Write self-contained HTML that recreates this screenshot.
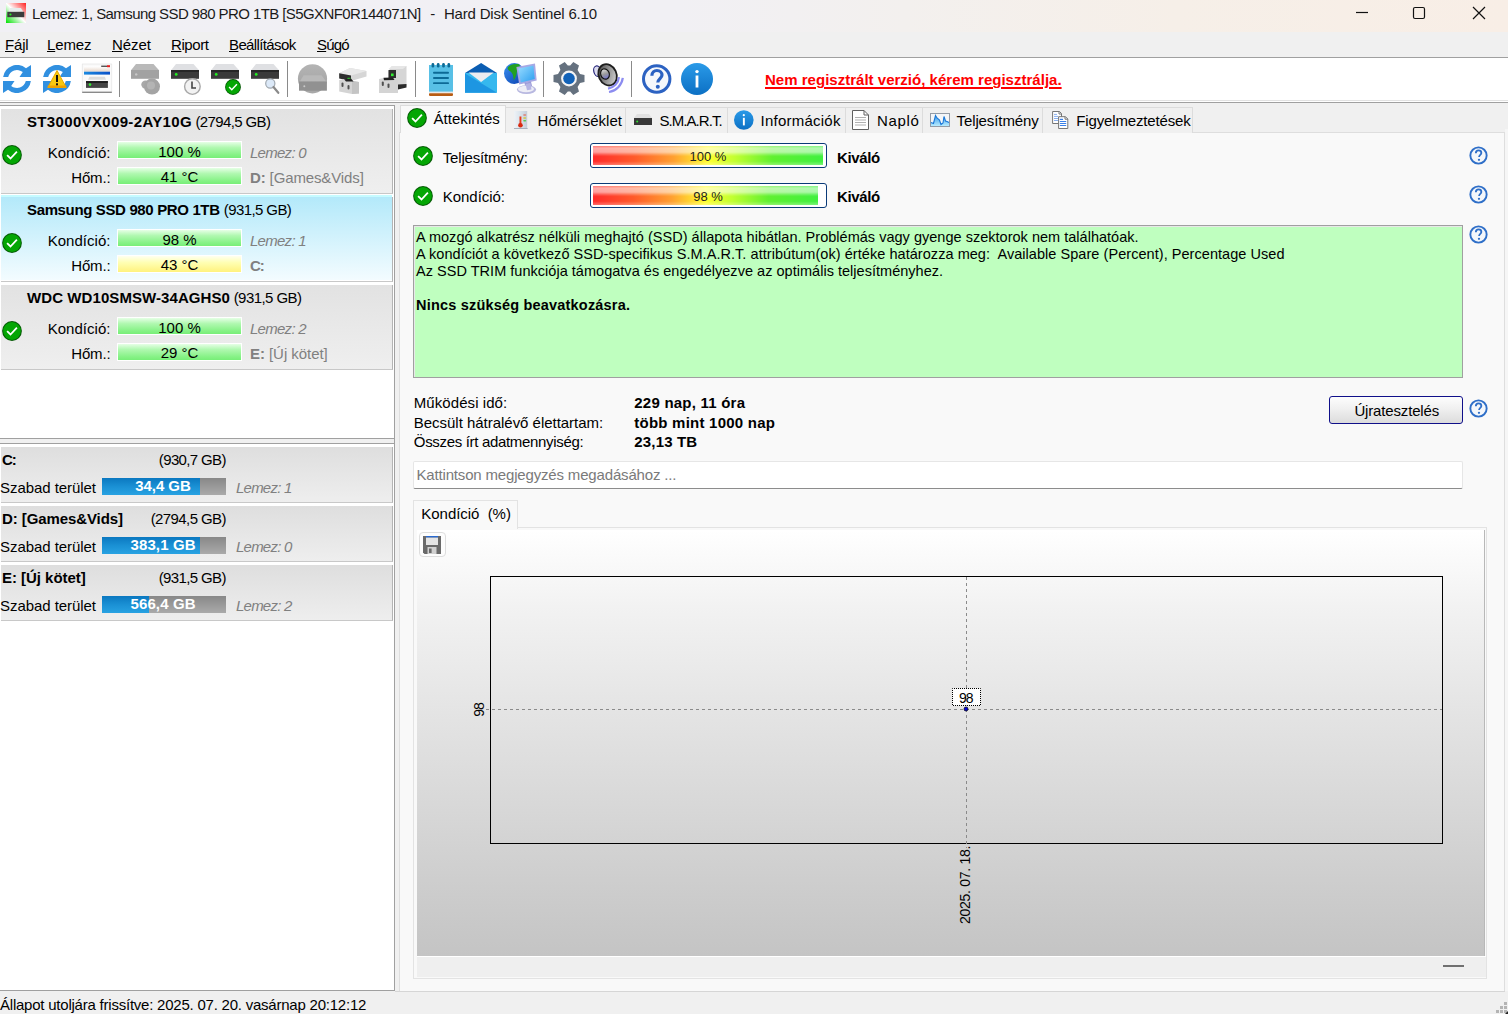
<!DOCTYPE html>
<html><head><meta charset="utf-8"><style>
*{margin:0;padding:0;box-sizing:border-box}
html,body{width:1508px;height:1014px;overflow:hidden;background:#f0f0f0;font-family:"Liberation Sans",sans-serif;color:#000}
.a{position:absolute}
.t{position:absolute;white-space:nowrap;line-height:1}
svg{position:absolute;overflow:visible}
#title{left:0;top:0;width:1508px;height:32px;background:linear-gradient(90deg,#f1f0f5 0%,#f1f0f4 45%,#f3f0ee 60%,#f6efe8 78%,#f8eee6 100%)}
#menu{left:0;top:32px;width:1508px;height:25px;background:#f0f0f0}
#tb{left:0;top:57px;width:1508px;height:46px;background:#fff;border-top:1px solid #a0a0a0;border-bottom:1px solid #a0a0a0}
#tbl{left:0;top:100px;width:1508px;height:1px;background:#e2e2e2}
.sep{position:absolute;top:61px;width:1px;height:36px;background:#8a8a8a}
.m u{text-decoration:underline;text-underline-offset:1px;text-decoration-thickness:1px}
#lp{left:0;top:105px;width:395px;height:886px;background:#fff;border-right:1px solid #a0a0a0;border-top:1px solid #a0a0a0;border-bottom:1px solid #a0a0a0}
.card{position:absolute;left:1px;width:392px;height:85px;background:linear-gradient(#e2e2e2,#efefef);border-right:1px solid #b4b4b4;border-bottom:1px solid #c8c8c8}
.card.sel{background:linear-gradient(#b3e9fa,#f4fcff)}
.bar{position:absolute;left:117px;width:125px;height:18px;border:1px solid #fff;background:linear-gradient(#e6ffe6,#b0f8b0 35%,#86f286 80%,#78ee78)}
.bar.y{background:linear-gradient(#fffff0,#ffffb4 40%,#fff27e)}
.vcard{position:absolute;left:1px;width:392px;height:56px;background:linear-gradient(#dedede,#eeeeee);border-right:1px solid #b4b4b4;border-bottom:1px solid #c8c8c8}
.vbar{position:absolute;left:102px;width:124px;height:17px;background:linear-gradient(#888888,#999999 50%,#aaaaaa)}
.vbar i{position:absolute;left:0;top:0;height:17px;background:linear-gradient(#0b78c0,#1a90d4 50%,#28a2e2)}
#rp{left:395px;top:103px;width:1113px;height:888px;background:#f0f0f0}
#rc{left:399px;top:132px;width:1106px;height:859px;background:#f9f9f9;border:1px solid #dedede;border-bottom:none}
.tab{position:absolute;top:107px;height:26px;background:#f0f0f0;border:1px solid #dcdcdc;border-bottom:none;border-left:none}
.tab.act{top:105px;height:28px;background:#f9f9f9;border-left:1px solid #dcdcdc}
#st{left:0;top:991px;width:1508px;height:23px;background:#f0f0f0;border-top:1px solid #f0f0f0}
</style></head><body>
<div class="a" id="title"></div><div class="a" id="menu"></div><div class="a" id="tb"></div><div class="a" id="tbl"></div><div class="a" id="rp"></div><div class="a" id="lp"></div><div class="a" id="st"></div>
<svg width="0" height="0" style="position:absolute"><defs>
<symbol id="drv" viewBox="0 0 28 15"><path d="M5 0 H22.5 L27.8 6 H0.2 Z" fill="#dfe0e3"/><rect x="0" y="6" width="28" height="8.8" fill="#3a3a3a"/><rect x="0" y="6" width="28" height="2" fill="#262626"/><circle cx="5.2" cy="10.4" r="1.4" fill="#20f020"/></symbol>
<symbol id="drvg" viewBox="0 0 28 15"><path d="M5 0 H22.5 L27.8 6 H0.2 Z" fill="#b9b9b9"/><rect x="0" y="6" width="28" height="8.8" fill="#a2a2a2"/><circle cx="5.2" cy="10.4" r="1.2" fill="#c8c8c8"/></symbol>
<symbol id="chk" viewBox="0 0 20 20"><circle cx="10" cy="10" r="9.9" fill="#055a05"/><circle cx="10" cy="10" r="8.9" fill="#04a604"/><path d="M5.1 10.1 L8.5 13.5 L14.9 6.6" fill="none" stroke="#fff" stroke-width="1.8"/></symbol>
<symbol id="help" viewBox="0 0 20 20"><circle cx="10" cy="10" r="8.6" fill="#f4f7fb" stroke="#2f6fc8" stroke-width="2"/><path d="M7.2 7.6 C7.2 5.6 8.6 4.7 10.1 4.7 C11.8 4.7 13 5.8 13 7.3 C13 9.3 10.6 9.4 10.6 11.6" fill="none" stroke="#2f6fc8" stroke-width="1.9"/><circle cx="10.5" cy="14.6" r="1.2" fill="#2f6fc8"/></symbol>
<symbol id="refr" viewBox="0 0 28 28"><path id="ra" d="M0.14,12 A14,14 0 0 1 23,3.3 L28,0 L28,12 L16.5,12 L19.8,7.1 A9,9 0 0 0 5.2,12 Z" fill="#3190e0"/><path d="M0.14,12 A14,14 0 0 1 23,3.3 L28,0 L28,12 L16.5,12 L19.8,7.1 A9,9 0 0 0 5.2,12 Z" fill="#3190e0" transform="rotate(180 14 14)"/></symbol>
</defs></svg>
<svg style="left:6px;top:3px" width="20" height="20" viewBox="0 0 20 20">
<defs><linearGradient id="tg" x1="0" y1="1" x2="1" y2="0"><stop offset="0" stop-color="#00e000"/><stop offset=".5" stop-color="#ffffff"/><stop offset="1" stop-color="#ff2020"/></linearGradient></defs>
<rect x="0" y="0" width="20" height="20" fill="url(#tg)"/>
<path d="M4.2 5 L14.9 5 L17.2 8.8 L2.4 8.8 Z" fill="#e6ecec"/><rect x="1.3" y="8.8" width="17" height="5.4" fill="#3c3c3c"/><circle cx="4.4" cy="11.5" r="1.1" fill="#20f020"/></svg>
<svg style="left:1355px;top:6px" width="16" height="16"><line x1="1" y1="6.5" x2="13" y2="6.5" stroke="#111" stroke-width="1.2"/></svg>
<svg style="left:1412px;top:6px" width="16" height="16"><rect x="1.5" y="1.5" width="11" height="11" rx="1.5" fill="none" stroke="#111" stroke-width="1.2"/></svg>
<svg style="left:1472px;top:6px" width="16" height="16"><path d="M1 1 L13 13 M13 1 L1 13" stroke="#111" stroke-width="1.2"/></svg>

<div class="t" id="w0" style="top:6.30px;font-size:15px;letter-spacing:-0.585px;left:32px;color:#1a1a1a">Lemez: 1, Samsung SSD 980 PRO 1TB [S5GXNF0R144071N]</div>
<div class="t" id="w1" style="top:6.30px;font-size:15px;left:430.2px;color:#1a1a1a">-</div>
<div class="t" id="w2" style="top:6.30px;font-size:15px;letter-spacing:-0.209px;left:444px;color:#1a1a1a">Hard Disk Sentinel 6.10</div>
<div class="t m" id="w3" style="top:37.00px;font-size:15px;letter-spacing:-0.163px;left:5px;"><u>F</u>ájl</div>
<div class="t m" id="w4" style="top:37.00px;font-size:15px;letter-spacing:-0.133px;left:47px;"><u>L</u>emez</div>
<div class="t m" id="w5" style="top:37.00px;font-size:15px;letter-spacing:-0.076px;left:112px;"><u>N</u>ézet</div>
<div class="t m" id="w6" style="top:37.00px;font-size:15px;letter-spacing:-0.426px;left:171px;"><u>R</u>iport</div>
<div class="t m" id="w7" style="top:37.00px;font-size:15px;letter-spacing:-0.619px;left:229px;"><u>B</u>eállítások</div>
<div class="t m" id="w8" style="top:37.00px;font-size:15px;letter-spacing:-0.849px;left:317px;"><u>S</u>úgó</div>

<svg style="left:3px;top:65px" width="28" height="28"><use href="#refr" width="28" height="28"/></svg>
<svg style="left:43px;top:65px" width="28" height="28"><use href="#refr" width="28" height="28"/>
<path d="M14 5.5 L23.2 22.5 H4.8 Z" fill="#f8c810" stroke="#e9a800" stroke-width="1" stroke-linejoin="round"/><rect x="4.8" y="20.5" width="18.4" height="2" fill="#f0a000"/><rect x="13" y="10" width="2" height="7" fill="#111"/><rect x="13" y="18.3" width="2" height="2" fill="#111"/></svg>
<svg style="left:80px;top:60px" width="35" height="37"><defs><linearGradient id="i3t" x1="0" y1="0" x2="0" y2="1"><stop offset="0" stop-color="#ffffff"/><stop offset="1" stop-color="#e6d6ca"/></linearGradient><linearGradient id="i3b" x1="0" y1="0" x2="1" y2="0"><stop offset="0" stop-color="#1a8ae0"/><stop offset="1" stop-color="#0a50c8"/></linearGradient></defs><rect x="2.2" y="4" width="29.6" height="28.5" fill="#fafafa" stroke="#e0e0e0" stroke-width=".6"/><rect x="2.2" y="31.6" width="29.6" height="1.4" fill="#8a8a8a"/><rect x="4" y="6.5" width="26" height="5.2" fill="url(#i3t)"/><rect x="21.2" y="5.6" width="6" height="1.3" fill="#444"/><rect x="27" y="5.2" width="3" height="2" fill="#e82020"/><rect x="4" y="11.7" width="26" height="2.9" fill="url(#i3b)"/><path d="M9.5 16.8 H24.8 L26 19.7 H8 Z" fill="#dcdcdc"/><rect x="6" y="21.2" width="21.9" height="6.7" fill="#444"/><rect x="6" y="21.2" width="21.9" height="1.5" fill="#111"/><circle cx="10" cy="24.6" r="1.3" fill="#30f030"/></svg>
<div class="sep" style="left:119px"></div>
<svg style="left:131px;top:64px" width="30" height="32"><use href="#drvg" width="28" height="15"/><circle cx="14.5" cy="20.6" r="4.2" fill="#a8a8a8"/><circle cx="21" cy="22.6" r="8" fill="#a4a4a4"/><circle cx="20" cy="21.6" r="4" fill="#b4b4b4"/></svg>
<svg style="left:171px;top:64px" width="30" height="32"><use href="#drv" width="28" height="15"/><circle cx="21.4" cy="22.6" r="7.8" fill="#f2f2f2" stroke="#a8a8a8" stroke-width="1.4"/><path d="M21 17.5 V24 H25" fill="none" stroke="#444" stroke-width="1.6"/></svg>
<svg style="left:211px;top:64px" width="30" height="32"><use href="#drv" width="28" height="15"/><use href="#chk" x="14" y="15" width="16" height="16"/></svg>
<svg style="left:251px;top:64px" width="30" height="32"><use href="#drv" width="28" height="15"/><circle cx="19.3" cy="19.5" r="4.6" fill="#dce9f8" stroke="#a0a8b0" stroke-width="1.2"/><path d="M22.5 23 L27.3 28.8" stroke="#8a8a8a" stroke-width="2.2" stroke-linecap="round"/></svg>
<div class="sep" style="left:287px"></div>
<svg style="left:293px;top:60px" width="40" height="37"><defs><linearGradient id="i8" x1="0" y1="0" x2="0" y2="1"><stop offset="0" stop-color="#b4b4b4"/><stop offset=".5" stop-color="#aaaaaa"/><stop offset="1" stop-color="#a8a8a8"/></linearGradient></defs><circle cx="19.5" cy="18.8" r="14.6" fill="url(#i8)"/><path d="M10.6 15.3 H28.5 L33.2 21.5 H6.9 Z" fill="#b9b9b9"/><rect x="6" y="21.5" width="27.9" height="9.2" fill="#919191"/><circle cx="11.3" cy="26.3" r="1" fill="#c8c8c8"/></svg>
<svg style="left:335px;top:62px" width="75" height="35"><path d="M4.2 11.2 L15 6 L31.5 9 L31.5 14.5 L16 19 L4.2 16.5 Z" fill="#d6d6d6"/><path d="M4.2 11.2 L15 6 L31.5 9 L16 13.5 Z" fill="#e8e8e8"/><path d="M4.2 11.2 L16 13.5 L16 19 L4.2 16.5 Z" fill="#2e2e2e"/><rect x="12.5" y="15.8" width="3" height="1.8" fill="#30e030"/><path d="M4.2 18 L10 17 L17 19 L24 20 L24 31.5 L17 32 L4.2 29.5 Z" fill="#d4d4d4"/><path d="M10 17.5 L17 19 L17 32 L24 31.5 V20 Z" fill="#c4c4c4"/><path d="M9 17.3 L16 16.5 L18.5 19.5 L11 19.5 Z" fill="#222"/><rect x="6.5" y="20.5" width="2" height="4.5" rx="1" fill="#505050"/><rect x="12.5" y="23" width="2" height="4.5" rx="1" fill="#505050"/>
<path d="M53.5 9 L57 4 H71.5 V24 L68 26 H53.5 Z" fill="#d6d6d6"/><path d="M57 4 H71.5 L68 7 H53.5 Z" fill="#e6e6e6"/><path d="M53.5 8 H61 V19 H53.5 Z" fill="#2e2e2e"/><rect x="56" y="11.5" width="2.6" height="2.6" fill="#30f030"/><path d="M44 17 L49 16 H61 L63 18 V31 H44 Z" fill="#d4d4d4"/><path d="M48.5 15.8 L58 15.6 L59.5 18 L49 18.3 Z" fill="#222"/><rect x="46.8" y="19.5" width="2" height="4.6" rx="1" fill="#505050"/><rect x="52.5" y="21.5" width="2" height="4.6" rx="1" fill="#505050"/><path d="M63 22.5 L71.5 22 V25.5 L63 27.5 Z" fill="#2a2a2a"/></svg>
<div class="sep" style="left:415px"></div>
<svg style="left:428px;top:63px" width="26" height="33"><rect x="1" y="2" width="24" height="27" fill="#58c0e6"/><rect x="1" y="28.6" width="24" height="1.8" fill="#e8e8e8"/><rect x="1" y="30.3" width="24" height="2.6" rx=".8" fill="#b85c14"/><g fill="#0c6a96"><rect x="3.6" y="0" width="2.6" height="4.5" rx="1.2"/><rect x="8.9" y="0" width="2.6" height="4.5" rx="1.2"/><rect x="14.2" y="0" width="2.6" height="4.5" rx="1.2"/><rect x="19.5" y="0" width="2.6" height="4.5" rx="1.2"/><rect x="5" y="8.8" width="16" height="1.9" rx=".9"/><rect x="5" y="14" width="16" height="1.9" rx=".9"/><rect x="5" y="19.2" width="16" height="1.9" rx=".9"/></g></svg>
<svg style="left:460px;top:58px" width="85" height="42"><path d="M5 15 H37 V34.7 H5 Z" fill="#36b8ee"/><path d="M5 15.5 L37 34.7 H5 Z" fill="#1d96e2"/><path d="M5 15 L21.1 5 L37 15 Z" fill="#0b5db2"/><path d="M8.5 14.6 H33.8 L21.1 24 Z" fill="#ececf0"/>
<defs><linearGradient id="gl" x1="0" y1="0" x2="1" y2="1"><stop offset="0" stop-color="#3a90f0"/><stop offset="1" stop-color="#0a40b0"/></linearGradient><linearGradient id="scr" x1="0" y1="0" x2="1" y2="1"><stop offset="0" stop-color="#9adcff"/><stop offset="1" stop-color="#2a9ef0"/></linearGradient></defs>
<circle cx="54.4" cy="15.5" r="10.4" fill="url(#gl)"/><path d="M47.5 10 C49.5 6.5 55 5.3 59.5 6.5 L60 10 C58.5 11 57 12 56.8 14 C56.5 17 55.5 20 53.8 22.5 C53.2 19.5 53.5 16.5 51.5 14.5 C50 13 48 12.5 47.5 10 Z" fill="#22a022"/>
<path d="M56.4 9 L75 5.6 L76.7 22.5 L59.2 26.5 Z" fill="#a8a8e4"/><path d="M58.3 10.6 L73.4 7.6 L74.8 21 L60.8 24.5 Z" fill="url(#scr)"/>
<path d="M64.5 25 L71 23.5 L72.7 31 L66 32 Z" fill="#9a9ad8"/><ellipse cx="66.5" cy="31.6" rx="9.6" ry="4.4" fill="#b8b8e0"/><ellipse cx="66" cy="31" rx="8" ry="3.2" fill="#eeeef6"/><path d="M65.5 26 L70.5 25 L71.5 31.5 L67 32.3 Z" fill="#b4b4e4"/></svg>
<div class="sep" style="left:543px"></div>
<svg style="left:553px;top:63px" width="32" height="32"><g transform="translate(16 15.5) rotate(90)"><path d="M-3.4,-15.5 L3.4,-15.5 L4.4,-11 L8.6,-8.6 L13,-10 L16.4,-4.3 L13,-1.2 L13,1.2 L16.4,4.3 L13,10 L8.6,8.6 L4.4,11 L3.4,15.5 L-3.4,15.5 L-4.4,11 L-8.6,8.6 L-13,10 L-16.4,4.3 L-13,1.2 L-13,-1.2 L-16.4,-4.3 L-13,-10 L-8.6,-8.6 L-4.4,-11 Z" fill="#65717f"/><circle r="11" fill="#65717f"/><circle r="7.9" fill="#f4f4f4"/><circle r="5.8" fill="#1262b8"/></g></svg>
<svg style="left:590px;top:60px" width="38" height="37"><defs><linearGradient id="spk" x1="0" y1="0" x2="1" y2="1"><stop offset="0" stop-color="#3a3a3a"/><stop offset=".45" stop-color="#8a8a8a"/><stop offset="1" stop-color="#e8e8e8"/></linearGradient><linearGradient id="spd" x1="0" y1="0" x2="0" y2="1"><stop offset="0" stop-color="#e0e0e0"/><stop offset=".5" stop-color="#9a9a9a"/><stop offset="1" stop-color="#7070d0"/></linearGradient></defs>
<ellipse cx="7.4" cy="11.2" rx="3.6" ry="5.4" transform="rotate(-15 7.4 11.2)" fill="#dcdcf0" stroke="#26267a" stroke-width="1.2"/>
<ellipse cx="17.6" cy="14.8" rx="8.9" ry="11" transform="rotate(-25 17.6 14.8)" fill="url(#spk)" stroke="#1e1e1e" stroke-width="1.8"/>
<ellipse cx="15" cy="14" rx="4.3" ry="5.3" transform="rotate(-20 15 14)" fill="url(#spd)" stroke="#111" stroke-width="1.2"/>
<path d="M18 28.6 A13 13 0 0 0 29 17.2" fill="none" stroke="#8c8cf0" stroke-width="2.2"/><path d="M19 32 A16.5 16.5 0 0 0 32.8 17.8" fill="none" stroke="#8c8cf0" stroke-width="2.2"/></svg>
<div class="sep" style="left:631px"></div>
<svg style="left:642px;top:64px" width="30" height="30"><circle cx="14.7" cy="15" r="13.2" fill="#f6f8fc" stroke="#2c62c2" stroke-width="3"/><path d="M9.9 11.8 C9.9 8.3 12.2 6.5 14.9 6.5 C17.9 6.5 20 8.5 20 11.1 C20 14.5 15.8 14.8 15.8 18.6" fill="none" stroke="#2c62c2" stroke-width="3.2"/><circle cx="15.8" cy="22.8" r="2" fill="#2c62c2"/></svg>
<svg style="left:681px;top:63px" width="33" height="33"><defs><linearGradient id="ig" x1="0" y1="0" x2="0" y2="1"><stop offset="0" stop-color="#2a9ae8"/><stop offset="1" stop-color="#0c70c4"/></linearGradient></defs><circle cx="16" cy="16" r="16" fill="url(#ig)"/><rect x="14.6" y="12.5" width="2.8" height="12" fill="#fff"/><circle cx="16" cy="8.6" r="1.7" fill="#fff"/></svg>
<div class="t" id="w9" style="top:72.30px;font-size:15px;letter-spacing:0.015px;left:765px;font-weight:bold;color:#f00;text-decoration:underline;text-decoration-thickness:1.5px;text-underline-offset:1.5px">Nem regisztrált verzió, kérem regisztrálja.</div>
<div class="card" style="top:109px"></div>
<div class="t" id="w10" style="top:114.30px;font-size:15px;letter-spacing:0.345px;left:27px;font-weight:bold">ST3000VX009-2AY10G</div>
<div class="t" id="w11" style="top:114.30px;font-size:15px;letter-spacing:-0.612px;left:195.4px;">(2794,5 GB)</div>
<svg style="left:2px;top:145px" width="20" height="20"><use href="#chk" width="20" height="20"/></svg>
<div class="t" id="w12" style="top:145.00px;font-size:15px;letter-spacing:0.032px;right:1397.5px;">Kondíció:</div>
<div class="t" id="w13" style="top:170.30px;font-size:15px;letter-spacing:-0.154px;right:1397.5px;">Hőm.:</div>
<div class="bar" style="top:141px"></div>
<div class="bar" style="top:167px"></div>
<div class="t" id="w14" style="top:144.30px;font-size:15px;left:29.5px;width:300px;text-align:center;">100 %</div>
<div class="t" id="w15" style="top:169.30px;font-size:15px;left:29.5px;width:300px;text-align:center;">41 °C</div>
<div class="t" id="w16" style="top:145.00px;font-size:15px;letter-spacing:-0.729px;left:250px;color:#808080;font-style:italic">Lemez: 0</div>
<div class="t" id="w17" style="top:170.30px;font-size:15px;letter-spacing:-0.128px;left:250px;color:#808080"><b>D:</b> [Games&amp;Vids]</div>
<div class="card sel" style="top:197px"></div>
<div class="a" style="left:1px;top:195px;width:391px;height:2px;background:#c6fbff"></div>
<div class="a" style="left:1px;top:280px;width:391px;height:1px;background:#ffffff"></div>
<div class="t" id="w18" style="top:202.30px;font-size:15px;letter-spacing:-0.359px;left:27px;font-weight:bold">Samsung SSD 980 PRO 1TB</div>
<div class="t" id="w19" style="top:202.30px;font-size:15px;letter-spacing:-0.597px;left:223.8px;">(931,5 GB)</div>
<svg style="left:2px;top:233px" width="20" height="20"><use href="#chk" width="20" height="20"/></svg>
<div class="t" id="w20" style="top:233.00px;font-size:15px;letter-spacing:0.032px;right:1397.5px;">Kondíció:</div>
<div class="t" id="w21" style="top:258.30px;font-size:15px;letter-spacing:-0.154px;right:1397.5px;">Hőm.:</div>
<div class="bar" style="top:229px"></div>
<div class="bar y" style="top:255px"></div>
<div class="t" id="w22" style="top:232.30px;font-size:15px;left:29.5px;width:300px;text-align:center;">98 %</div>
<div class="t" id="w23" style="top:257.30px;font-size:15px;left:29.5px;width:300px;text-align:center;">43 °C</div>
<div class="t" id="w24" style="top:233.00px;font-size:15px;letter-spacing:-0.729px;left:250px;color:#808080;font-style:italic">Lemez: 1</div>
<div class="t" id="w25" style="top:258.30px;font-size:15px;letter-spacing:-1.000px;left:250px;color:#808080"><b>C:</b></div>
<div class="card" style="top:285px"></div>
<div class="t" id="w26" style="top:290.30px;font-size:15px;letter-spacing:0.079px;left:27px;font-weight:bold">WDC WD10SMSW-34AGHS0</div>
<div class="t" id="w27" style="top:290.30px;font-size:15px;letter-spacing:-0.564px;left:233.7px;">(931,5 GB)</div>
<svg style="left:2px;top:321px" width="20" height="20"><use href="#chk" width="20" height="20"/></svg>
<div class="t" id="w28" style="top:321.00px;font-size:15px;letter-spacing:0.032px;right:1397.5px;">Kondíció:</div>
<div class="t" id="w29" style="top:346.30px;font-size:15px;letter-spacing:-0.154px;right:1397.5px;">Hőm.:</div>
<div class="bar" style="top:317px"></div>
<div class="bar" style="top:343px"></div>
<div class="t" id="w30" style="top:320.30px;font-size:15px;left:29.5px;width:300px;text-align:center;">100 %</div>
<div class="t" id="w31" style="top:345.30px;font-size:15px;left:29.5px;width:300px;text-align:center;">29 °C</div>
<div class="t" id="w32" style="top:321.00px;font-size:15px;letter-spacing:-0.729px;left:250px;color:#808080;font-style:italic">Lemez: 2</div>
<div class="t" id="w33" style="top:346.30px;font-size:15px;letter-spacing:-0.055px;left:250px;color:#808080"><b>E:</b> [Új kötet]</div>
<div class="vcard" style="top:447px"></div>
<div class="t" id="w34" style="top:452.30px;font-size:15px;letter-spacing:-1.000px;left:2px;font-weight:bold">C:</div>
<div class="t" id="w35" style="top:452.30px;font-size:15px;letter-spacing:-0.642px;right:1282.2px;">(930,7 GB)</div>
<div class="t" id="w36" style="top:479.80px;font-size:15px;letter-spacing:-0.056px;left:0px;">Szabad terület</div>
<div class="vbar" style="top:478px"><i style="width:98px"></i></div>
<div class="t" id="w37" style="top:478.10px;font-size:15px;letter-spacing:-0.063px;left:13.0px;width:300px;text-align:center;text-indent:-0.063px;color:#fff;font-weight:bold">34,4 GB</div>
<div class="t" id="w38" style="top:479.50px;font-size:15px;letter-spacing:-0.772px;left:236px;color:#808080;font-style:italic">Lemez: 1</div>
<div class="vcard" style="top:506px"></div>
<div class="t" id="w39" style="top:511.30px;font-size:15px;letter-spacing:-0.090px;left:2px;font-weight:bold">D: [Games&amp;Vids]</div>
<div class="t" id="w40" style="top:511.30px;font-size:15px;letter-spacing:-0.602px;right:1282.2px;">(2794,5 GB)</div>
<div class="t" id="w41" style="top:538.80px;font-size:15px;letter-spacing:-0.056px;left:0px;">Szabad terület</div>
<div class="vbar" style="top:537px"><i style="width:98px"></i></div>
<div class="t" id="w42" style="top:537.10px;font-size:15px;letter-spacing:0.112px;left:13.0px;width:300px;text-align:center;text-indent:0.112px;color:#fff;font-weight:bold">383,1 GB</div>
<div class="t" id="w43" style="top:538.50px;font-size:15px;letter-spacing:-0.772px;left:236px;color:#808080;font-style:italic">Lemez: 0</div>
<div class="vcard" style="top:565px"></div>
<div class="t" id="w44" style="top:570.30px;font-size:15px;letter-spacing:-0.031px;left:2px;font-weight:bold">E: [Új kötet]</div>
<div class="t" id="w45" style="top:570.30px;font-size:15px;letter-spacing:-0.631px;right:1282.2px;">(931,5 GB)</div>
<div class="t" id="w46" style="top:597.80px;font-size:15px;letter-spacing:-0.056px;left:0px;">Szabad terület</div>
<div class="vbar" style="top:596px"><i style="width:47px"></i></div>
<div class="t" id="w47" style="top:596.10px;font-size:15px;letter-spacing:0.126px;left:13.0px;width:300px;text-align:center;text-indent:0.126px;color:#fff;font-weight:bold">566,4 GB</div>
<div class="t" id="w48" style="top:597.50px;font-size:15px;letter-spacing:-0.772px;left:236px;color:#808080;font-style:italic">Lemez: 2</div>
<div class="a" style="left:0;top:438px;width:395px;height:1px;background:#a0a0a0"></div>
<div class="a" style="left:0;top:443px;width:395px;height:1px;background:#a0a0a0"></div>
<div class="a" style="left:0;top:439px;width:394px;height:4px;background:#f0f0f0"></div>
<div class="a" id="rc"></div>
<div class="tab act" style="left:400px;width:106px"></div>
<div class="tab " style="left:506px;width:120px"></div>
<div class="tab " style="left:626px;width:102px"></div>
<div class="tab " style="left:728px;width:118px"></div>
<div class="tab " style="left:846px;width:77px"></div>
<div class="tab " style="left:923px;width:120px"></div>
<div class="tab " style="left:1043px;width:150px"></div>
<svg style="left:407px;top:108px" width="20" height="20"><use href="#chk" width="20" height="20"/></svg>
<svg style="left:513px;top:110px" width="16" height="20"><defs><linearGradient id="thg" x1="0" x2="1"><stop offset="0" stop-color="#eef2f6"/><stop offset=".4" stop-color="#dde6ee"/><stop offset="1" stop-color="#c4ccd8"/></linearGradient></defs><path d="M1 1 H14.2 V18.4 L13.6 19 H1.6 L1 18.4 Z" fill="url(#thg)"/><rect x="1" y="18" width="13.6" height="1" fill="#a8b0bc"/><rect x="6.5" y="6.5" width="1.9" height="8.5" fill="#e83a1c"/><circle cx="7.45" cy="15.2" r="2.3" fill="#d82a10"/><rect x="10.2" y="4.2" width="3" height="1.6" rx=".8" fill="#e08070"/><rect x="10.2" y="7.2" width="3" height="1.6" rx=".8" fill="#d0c840"/><rect x="10.2" y="10" width="3" height="1.6" rx=".8" fill="#58c858"/></svg>
<svg style="left:634px;top:114px" width="18" height="12"><path d="M3 0 H15 L18 4 H0 Z" fill="#e0e0e0"/><rect x="0" y="4" width="18" height="7" fill="#383838"/><circle cx="3.2" cy="7.5" r="1" fill="#30e030"/></svg>
<svg style="left:734px;top:110px" width="20" height="20"><defs><linearGradient id="ig2" x1="0" y1="0" x2="0" y2="1"><stop offset="0" stop-color="#2a9ae8"/><stop offset="1" stop-color="#0c70c4"/></linearGradient></defs><circle cx="9.8" cy="10" r="9.8" fill="url(#ig2)"/><rect x="8.9" y="7.8" width="1.9" height="7.6" fill="#fff"/><circle cx="9.8" cy="5.2" r="1.1" fill="#fff"/></svg>
<svg style="left:852px;top:110px" width="18" height="21"><path d="M0.5 0.5 H12 L16.5 5 V19.5 H0.5 Z" fill="#fff" stroke="#606060"/><path d="M12 0.5 V5 H16.5" fill="none" stroke="#606060"/><g stroke="#b0b0b0" stroke-width="1"><line x1="3" y1="7.5" x2="14" y2="7.5"/><line x1="3" y1="10" x2="14" y2="10"/><line x1="3" y1="12.5" x2="14" y2="12.5"/><line x1="3" y1="15" x2="14" y2="15"/></g></svg>
<svg style="left:925px;top:106px" width="30" height="26"><defs><linearGradient id="chf" x1="0" y1="0" x2="0" y2="1"><stop offset="0" stop-color="#3a9ae8"/><stop offset="1" stop-color="#b8ecff"/></linearGradient></defs><rect x="5.5" y="7.5" width="19" height="13" fill="#f4f6f8" stroke="#939ba6" stroke-width="1"/><path d="M6 16.5 L8.5 17.5 L10.5 9.5 L12 12 L14.5 14 L16 18.5 L18 17 L19 10.5 L20.5 15 L22 15.5 L24 16.5 V20 H6 Z" fill="url(#chf)"/><path d="M6 16.5 L8.5 17.5 L10.5 9.5 L12 12 L14.5 14 L16 18.5 L18 17 L19 10.5 L20.5 15 L22 15.5 L24 16.5" fill="none" stroke="#1a78d8" stroke-width="1.1"/></svg>
<svg style="left:1048px;top:106px" width="26" height="26"><path d="M4.6 5.5 H11.5 L13.5 7.5 V17.5 H4.6 Z" fill="#fff" stroke="#767676" stroke-width="1"/><path d="M11 5.5 V8 H13.5" fill="none" stroke="#767676"/><g stroke="#8ab0f0" stroke-width="1"><line x1="6" y1="8.4" x2="9" y2="8.4"/><line x1="6" y1="10.4" x2="10" y2="10.4"/><line x1="6" y1="12.5" x2="10" y2="12.5"/><line x1="6" y1="14.5" x2="10" y2="14.5"/></g><path d="M10.6 10.7 H17.5 L19.8 13 V22.5 H10.6 Z" fill="#fff" stroke="#767676" stroke-width="1"/><path d="M17 10.7 V13.2 H19.8" fill="none" stroke="#767676"/><g stroke="#3a80e8" stroke-width="1.1" stroke-linecap="round"><line x1="12.3" y1="13.4" x2="14.6" y2="13.4"/><line x1="12.3" y1="15.5" x2="17.8" y2="15.5"/><line x1="12.3" y1="17.5" x2="17.8" y2="17.5"/><line x1="12.3" y1="19.5" x2="17.8" y2="19.5"/></g></svg>
<div class="t" id="w49" style="top:111.00px;font-size:15px;letter-spacing:0.047px;left:433.5px;">Áttekintés</div>
<div class="t" id="w50" style="top:113.00px;font-size:15px;letter-spacing:0.020px;left:537.6px;">Hőmérséklet</div>
<div class="t" id="w51" style="top:113.30px;font-size:15px;letter-spacing:-0.943px;left:659.5px;">S.M.A.R.T.</div>
<div class="t" id="w52" style="top:113.30px;font-size:15px;letter-spacing:0.227px;left:760.6px;">Információk</div>
<div class="t" id="w53" style="top:113.30px;font-size:15px;letter-spacing:0.649px;left:877px;">Napló</div>
<div class="t" id="w54" style="top:113.30px;font-size:15px;letter-spacing:-0.098px;left:956.5px;">Teljesítmény</div>
<div class="t" id="w55" style="top:113.30px;font-size:15px;letter-spacing:-0.148px;left:1076.3px;">Figyelmeztetések</div>
<svg style="left:413px;top:146px" width="20" height="20"><use href="#chk" width="20" height="20"/></svg>
<div class="t" id="w56" style="top:150.20px;font-size:15px;letter-spacing:-0.196px;left:442.8px;">Teljesítmény:</div>
<div class="a" style="left:590px;top:143px;width:237px;height:25px;border:1.5px solid #0a3a78;border-radius:3px;background:#fff"></div>
<div class="a" style="left:593px;top:145.6px;width:230px;height:19.4px;background:linear-gradient(90deg,#ff2a2a 0%,#ff5a2a 18%,#ffa030 35%,#ffff30 50%,#c0ff30 62%,#60f030 78%,#40f040 100%)"></div>
<div class="a" style="left:593px;top:145.6px;width:230px;height:19.4px;background:linear-gradient(rgba(255,255,255,.35) 0%,rgba(255,255,255,.6) 12%,rgba(255,255,255,.55) 32%,rgba(255,255,255,.12) 48%,rgba(255,255,255,0) 56%,rgba(255,255,255,0) 80%,rgba(255,255,255,.3) 100%)"></div>
<div class="t" id="w57" style="top:149.60px;font-size:13px;left:558.0px;width:300px;text-align:center;color:#222">100 %</div>
<div class="t" id="w58" style="top:149.90px;font-size:15px;letter-spacing:-0.363px;left:837px;font-weight:bold">Kiváló</div>
<svg style="left:1469px;top:145.8px" width="20" height="20"><use href="#help" width="19" height="19"/></svg>
<svg style="left:413px;top:186px" width="20" height="20"><use href="#chk" width="20" height="20"/></svg>
<div class="t" id="w59" style="top:188.90px;font-size:15px;letter-spacing:-0.043px;left:442.8px;">Kondíció:</div>
<div class="a" style="left:590px;top:183px;width:237px;height:25px;border:1.5px solid #0a3a78;border-radius:3px;background:#fff"></div>
<div class="a" style="left:593px;top:185.6px;width:225px;height:19.4px;background:linear-gradient(90deg,#ff2a2a 0%,#ff5a2a 18%,#ffa030 35%,#ffff30 50%,#c0ff30 62%,#60f030 78%,#40f040 100%)"></div>
<div class="a" style="left:593px;top:185.6px;width:225px;height:19.4px;background:linear-gradient(rgba(255,255,255,.35) 0%,rgba(255,255,255,.6) 12%,rgba(255,255,255,.55) 32%,rgba(255,255,255,.12) 48%,rgba(255,255,255,0) 56%,rgba(255,255,255,0) 80%,rgba(255,255,255,.3) 100%)"></div>
<div class="t" id="w60" style="top:189.60px;font-size:13px;left:558.0px;width:300px;text-align:center;color:#222">98 %</div>
<div class="t" id="w61" style="top:188.90px;font-size:15px;letter-spacing:-0.363px;left:837px;font-weight:bold">Kiváló</div>
<svg style="left:1469px;top:184.8px" width="20" height="20"><use href="#help" width="19" height="19"/></svg>
<svg style="left:1469px;top:225px" width="20" height="20"><use href="#help" width="19" height="19"/></svg>
<div class="a" style="left:413px;top:225px;width:1050px;height:153px;background:#bfffbf;border:1px solid #a0a0a0;box-shadow:inset 1px 1px 0 #e8e8e8"></div>
<div class="t" id="w62" style="top:230.23px;font-size:14.5px;letter-spacing:0.019px;left:416px;">A mozgó alkatrész nélküli meghajtó (SSD) állapota hibátlan. Problémás vagy gyenge szektorok nem találhatóak.</div>
<div class="t" id="w63" style="top:247.03px;font-size:14.5px;letter-spacing:0.050px;left:416px;">A kondíciót a következő SSD-specifikus S.M.A.R.T. attribútum(ok) értéke határozza meg:&nbsp; Available Spare (Percent), Percentage Used</div>
<div class="t" id="w64" style="top:263.93px;font-size:14.5px;letter-spacing:0.025px;left:416px;">Az SSD TRIM funkciója támogatva és engedélyezve az optimális teljesítményhez.</div>
<div class="t" id="w65" style="top:297.73px;font-size:14.5px;letter-spacing:0.194px;left:416px;font-weight:bold">Nincs szükség beavatkozásra.</div>
<div class="t" id="w66" style="top:395.20px;font-size:15px;letter-spacing:0.070px;left:413.8px;">Működési idő:</div>
<div class="t" id="w67" style="top:395.20px;font-size:15px;letter-spacing:0.223px;left:634.3px;font-weight:bold">229 nap, 11 óra</div>
<div class="t" id="w68" style="top:414.90px;font-size:15px;letter-spacing:-0.025px;left:413.8px;">Becsült hátralévő élettartam:</div>
<div class="t" id="w69" style="top:414.90px;font-size:15px;letter-spacing:0.230px;left:634.3px;font-weight:bold">több mint 1000 nap</div>
<div class="t" id="w70" style="top:433.90px;font-size:15px;letter-spacing:-0.320px;left:413.8px;">Összes írt adatmennyiség:</div>
<div class="t" id="w71" style="top:433.90px;font-size:15px;letter-spacing:0.171px;left:634.3px;font-weight:bold">23,13 TB</div>
<div class="a" style="left:1329px;top:396px;width:134px;height:28px;border:1.5px solid #10108a;border-radius:3px;background:linear-gradient(#fdfdfd,#f0f0f0 45%,#dcdcdc)"></div>
<div class="t" id="w72" style="top:402.70px;font-size:15px;letter-spacing:-0.159px;left:1354.4px;">Újratesztelés</div>
<svg style="left:1469px;top:399px" width="20" height="20"><use href="#help" width="19" height="19"/></svg>
<div class="a" style="left:413px;top:461px;width:1050px;height:28px;background:#fff;border:1px solid #e6e6e6;border-bottom:1.5px solid #8c8c8c;border-radius:2px"></div>
<div class="t" id="w73" style="top:466.80px;font-size:15px;letter-spacing:-0.169px;left:416.5px;color:#7a7a7a">Kattintson megjegyzés megadásához ...</div>
<div class="a" style="left:413px;top:500px;width:105px;height:29px;background:#f9f9f9;border:1px solid #e3e3e3;border-bottom:none;z-index:1"></div>
<div class="a" style="left:413px;top:527px;width:1074px;height:452px;background:#f9f9f9;border:1px solid #e3e3e3"></div>
<div class="t" style="z-index:2;left:0;top:0"></div><div class="t" id="w74" style="top:506.00px;font-size:15px;letter-spacing:-0.037px;left:421.3px;z-index:2">Kondíció&nbsp; (%)</div>
<div class="a" style="left:417px;top:530px;width:1068px;height:426px;background:linear-gradient(#ffffff,#f2f2f2 18%,#e0e0e0 50%,#d2d2d2 75%,#c4c4c4);border-right:1px solid #b8b8b8"></div>
<div class="a" style="left:417px;top:956px;width:1069px;height:21px;background:#efefef;border-top:1px solid #fff"></div>
<div class="a" style="left:1443px;top:965px;width:21px;height:2px;background:#707070"></div>
<div class="a" style="left:418.5px;top:532px;width:27.5px;height:25px;border:1px solid #dedede;border-radius:4px;background:#fdfdfd"></div>
<svg style="left:423px;top:536px" width="18" height="18"><path d="M0 0 H18 V18 H1.5 L0 16.5 Z" fill="#6a6a6a"/><rect x="3" y="0" width="12" height="1.6" fill="#2a6ad0"/><rect x="3" y="1.6" width="12" height="7.4" fill="#e4e4e4"/><rect x="4.5" y="11" width="9" height="7" fill="#d0d0d0"/><rect x="6" y="12.5" width="2.6" height="4.5" fill="#6a6a6a"/></svg>
<div class="a" style="left:490px;top:576px;width:953px;height:268px;border:1.5px solid #000"></div>
<svg style="left:0;top:0" width="1508" height="1014"><line x1="486" y1="709.5" x2="1442" y2="709.5" stroke="#8a8a8a" stroke-width="1" stroke-dasharray="3 3"/><line x1="966.5" y1="577" x2="966.5" y2="848" stroke="#8a8a8a" stroke-width="1" stroke-dasharray="3 3"/><circle cx="966" cy="709" r="2" fill="#0000e0" stroke="#000" stroke-width=".7"/><rect x="952.5" y="688.5" width="28" height="17" fill="#fff" stroke="#000" stroke-width="1" stroke-dasharray="1 1" stroke-dashoffset="0.5"/></svg>
<div class="t" id="w75" style="top:690.75px;font-size:14px;left:815.8px;width:300px;text-align:center;color:#000;letter-spacing:-1.1px">98</div>
<div class="t" style="left:471.5px;top:709.5px;font-size:14px;letter-spacing:-1.1px;transform:rotate(-90deg);transform-origin:0 0;width:0"><span style="position:absolute;left:-6.8px;top:0">98</span></div>
<div class="t" style="left:958px;top:924px;font-size:14px;letter-spacing:-0.28px;transform:rotate(-90deg);transform-origin:0 0"><span>2025. 07. 18.</span></div>
<svg style="left:1494px;top:1000px" width="14" height="14"><g fill="#b4b4b4"><rect x="10" y="2" width="3" height="3"/><rect x="6" y="6" width="3" height="3"/><rect x="10" y="6" width="3" height="3"/><rect x="2" y="10" width="3" height="3"/><rect x="6" y="10" width="3" height="3"/><rect x="10" y="10" width="3" height="3"/></g><path d="M14 11 V14 H11 Z" fill="#222"/></svg>
<div class="a" style="left:395px;top:991px;width:1110px;height:1px;background:#d6d6d6"></div>
<div class="a" style="left:1505px;top:129px;width:3px;height:862px;background:#f6f6f6"></div>
<div class="t" id="w76" style="top:996.90px;font-size:15px;letter-spacing:-0.225px;left:0px;">Állapot utoljára frissítve: 2025. 07. 20. vasárnap 20:12:12</div>
</body></html>
